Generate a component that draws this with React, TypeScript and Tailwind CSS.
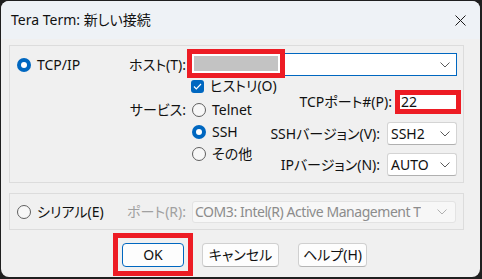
import React from "react";

const Radio = ({ checked, disabled }: { checked?: boolean; disabled?: boolean }) =>
  checked ? (
    <div className="w-[14px] h-[14px] rounded-full bg-[#0067c0] flex items-center justify-center shrink-0">
      <div className="w-[6px] h-[6px] rounded-full bg-white" />
    </div>
  ) : (
    <div
      className={
        "w-[14px] h-[14px] rounded-full border bg-[#f7f7f7] shrink-0 " +
        (disabled ? "border-[#9a9a9a]" : "border-[#5f5f5f]")
      }
    />
  );

const Chevron = ({ color = "#5a5a5a" }: { color?: string }) => (
  <svg width="10" height="6" viewBox="0 0 10 6" className="shrink-0">
    <polyline points="0.5,0.5 5,5 9.5,0.5" fill="none" stroke={color} strokeWidth="1" />
  </svg>
);

const Select = ({ value }: { value: string }) => (
  <div className="w-[70px] h-[23px] bg-white border border-[#d4d4d4] border-b-[#b0b0b0] rounded-[3px] flex items-center justify-between pl-[3px] pr-[6px]">
    <span>{value}</span>
    <Chevron />
  </div>
);

const Btn = ({ label, w, primary }: { label: string; w: string; primary?: boolean }) => (
  <div
    className={
      "h-[24px] rounded-[4px] bg-[#fdfdfd] border flex items-center justify-center " +
      w +
      " " +
      (primary ? "border-[#0067c0]" : "border-[#d0d0d0] border-b-[#b5b5b5]")
    }
  >
    {label}
  </div>
);

export default function App() {
  return (
    <div className="w-[482px] h-[279px] bg-[#1f1f1f] pl-[1px] pt-[1px] font-['Noto_Sans','Noto_Sans_CJK_JP',sans-serif] [font-feature-settings:'palt']">
      <div className="w-[479px] h-[276px] rounded-[8px] overflow-hidden bg-[#f0f0f0] flex flex-col text-[14px] leading-[18px] text-[#111]">
        {/* Title bar */}
        <div className="h-[38px] bg-[#eef2f6] flex items-center justify-between pl-[10px] pr-[14px] shrink-0">
          <span>Tera Term: 新しい接続</span>
          <svg width="11" height="11" viewBox="0 0 11 11">
            <path d="M0.5 0.5 L10.5 10.5 M10.5 0.5 L0.5 10.5" stroke="#1a1a1a" strokeWidth="1" />
          </svg>
        </div>

        <div className="pl-[8px] pt-[6px] flex flex-col">
          {/* Group 1 */}
          <div className="w-[455px] h-[138px] border border-[#dcdcdc] flex flex-col pt-[7px]">
            <div className="flex items-center h-[23px]">
              <div className="w-[105px] flex items-center pl-[7px] gap-[6px]">
                <Radio checked />
                <span>TCP/IP</span>
              </div>
              <div className="w-[71px] text-right">ホスト(T):</div>
              <div className="relative ml-[7px] w-[264px] h-[23px] bg-white border border-[#0067c0] flex items-center justify-end pr-[6px]">
                <Chevron />
                <div className="absolute left-[-7px] top-[-5px] w-[98px] h-[29px] border-[5px] border-[#ed1c24] bg-white p-[2px]">
                  <div className="w-full h-full bg-[#c3c3c3]" />
                </div>
              </div>
            </div>

            <div className="flex">
              {/* left area */}
              <div className="w-[257px] flex flex-col">
                <div className="mt-[3px] h-[14px] pl-[181px] flex items-center gap-[6px]">
                  <div className="w-[13px] h-[13px] rounded-[3px] bg-[#0067c0] flex items-center justify-center shrink-0">
                    <svg width="9" height="7" viewBox="0 0 9 7">
                      <polyline points="1,3.5 3.3,5.8 8,1" fill="none" stroke="white" strokeWidth="1.2" />
                    </svg>
                  </div>
                  <span className="whitespace-nowrap">ヒストリ(O)</span>
                </div>
                <div className="mt-[6px] flex">
                  <div className="w-[176px] h-[22px] flex items-center justify-end">サービス:</div>
                  <div className="ml-[6px] flex flex-col">
                    <div className="h-[22px] flex items-center gap-[6px]">
                      <Radio />
                      <span>Telnet</span>
                    </div>
                    <div className="h-[22px] flex items-center gap-[6px]">
                      <Radio checked />
                      <span>SSH</span>
                    </div>
                    <div className="h-[22px] flex items-center gap-[6px]">
                      <Radio />
                      <span className="whitespace-nowrap">その他</span>
                    </div>
                  </div>
                </div>
              </div>

              {/* right column */}
              <div className="flex-1 mt-[14px] flex flex-col">
                <div className="h-[24px] flex items-center justify-end pr-[2px]">
                  <span className="whitespace-nowrap">TCPポート#(P):</span>
                  <div className="ml-[3px] w-[66px] h-[24px] border-[5px] border-[#ed1c24] bg-white pl-[1px] flex items-center">
                    22
                  </div>
                </div>
                <div className="mt-[8px] flex items-center justify-end pr-[6px]">
                  <span className="whitespace-nowrap">SSHバージョン(V):</span>
                  <div className="ml-[7px]">
                    <Select value="SSH2" />
                  </div>
                </div>
                <div className="mt-[8px] flex items-center justify-end pr-[6px]">
                  <span className="whitespace-nowrap">IPバージョン(N):</span>
                  <div className="ml-[7px]">
                    <Select value="AUTO" />
                  </div>
                </div>
              </div>
            </div>
          </div>

          {/* Group 2 */}
          <div className="mt-[10px] w-[455px] h-[37px] border border-[#dcdcdc] flex items-center">
            <div className="w-[105px] flex items-center pl-[7px] gap-[6px]">
              <Radio />
              <span className="whitespace-nowrap">シリアル(E)</span>
            </div>
            <div className="w-[71px] text-right text-[#a0a0a0] whitespace-nowrap">ポート(R):</div>
            <div className="ml-[6px] w-[264px] h-[22px] bg-[#f7f7f7] border border-[#e3e3e3] rounded-[3px] text-[#8c8c8c] pl-[2px] pr-[8px] flex items-center justify-between">
              <span className="whitespace-nowrap overflow-hidden tracking-[-0.45px]">COM3: Intel(R) Active Management T</span>
              <Chevron color="#b0b0b0" />
            </div>
          </div>

          {/* Buttons */}
          <div className="mt-[13px] flex pl-[113px]">
            <div className="relative">
              <Btn label="OK" w="w-[62px]" primary />
              <div className="absolute left-[-9px] top-[-10px] w-[80px] h-[43px] border-[5px] border-[#ed1c24]" />
            </div>
            <div className="ml-[18px]">
              <Btn label="キャンセル" w="w-[77px]" />
            </div>
            <div className="ml-[19px]">
              <Btn label="ヘルプ(H)" w="w-[69px]" />
            </div>
          </div>
        </div>
      </div>
    </div>
  );
}
